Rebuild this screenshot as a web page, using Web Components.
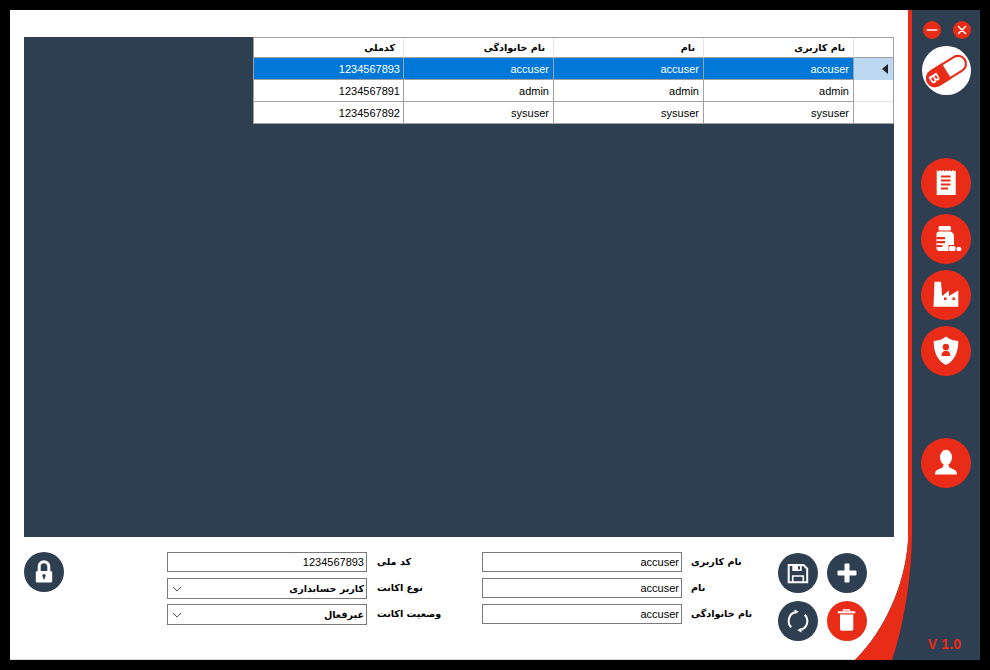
<!DOCTYPE html>
<html lang="fa">
<head>
<meta charset="utf-8">
<title>users</title>
<style>
    html, body { margin: 0; height: 100%; background: #000; }
    body { font: 11px "Liberation Sans", "DejaVu Sans", sans-serif; color: #000; }
</style>
</head>
<body>

<app-frame>
    <side-bar slot="side">
        <round-btn slot="controls" size="18" color="#e82c17">
            <svg viewBox="0 0 18 18"><path d="M4.500 9h9" stroke="#f6c9c2" stroke-width="2.200" stroke-linecap="round"/></svg>
        </round-btn>
        <round-btn slot="controls" size="18" color="#e82c17">
            <svg viewBox="0 0 18 18"><path d="M5.500 5.500l7 7M12.500 5.500l-7 7" stroke="#fff" stroke-width="1.500" stroke-linecap="round"/></svg>
        </round-btn>

        <round-btn slot="logo" size="49" color="#fff">
            <svg viewBox="0 0 49 49">
                <g transform="rotate(-32 24.500 25)">
                    <rect x="3" y="17" width="43" height="16" rx="8" fill="#fff" stroke="#e82c17" stroke-width="2.200"/>
                    <path d="M11 16h13.500v18H11a9 9 0 0 1 0-18z" fill="#e82c17"/>
                    <text transform="translate(10.500 25) rotate(90)" y="4.500" text-anchor="middle" fill="#fff" font-family="Liberation Sans" font-weight="700" font-size="13">B</text>
                </g>
            </svg>
        </round-btn>

        <round-btn slot="nav" size="50" color="#e82c17">
            <svg viewBox="0 0 50 50">
                <path d="M15.700 12l1.600 1.500L19 12l1.600 1.500L22.200 12l1.600 1.500L25.400 12l1.600 1.500L28.600 12l1.600 1.500L31.800 12l1.500 1.500 1.400-1.500V37H15.700z" fill="#fff"/>
                <path d="M20 18.500h9.500M20 22.500h9.500M20 26.500h9.500M20 30.500h7" stroke="#e82c17" stroke-width="1.800"/>
            </svg>
        </round-btn>
        <round-btn slot="nav" size="50" color="#e82c17">
            <svg viewBox="0 0 50 50">
                <rect x="17.500" y="12" width="12.500" height="4.500" rx="1.500" fill="#fff"/>
                <path d="M18 17.500h11.500c2 .8 3.500 2.500 3.500 5V31h-5.500v6H18.500a3 3 0 0 1-3-3V20c0-1.500 1-2.200 2.500-2.500z" fill="#fff"/>
                <path d="M15.500 23h8.500v2.200h-8.500zM15.500 27h8.500v2.200h-8.500zM15.500 31h6v2h-6z" fill="#e82c17"/>
                <rect x="28" y="32" width="6.500" height="5" rx="1.500" fill="#fff"/>
                <rect x="35.500" y="33" width="4.800" height="4" rx="1.500" fill="#fff"/>
            </svg>
        </round-btn>
        <round-btn slot="nav" size="50" color="#e82c17">
            <svg viewBox="0 0 50 50">
                <path d="M12.500 36.700L13.500 11.700h6.500l1.200 14.300 6.800-5.500v5.500l9.300-5.500v16.200z" fill="#fff"/>
                <path d="M23 27.500h2.600v2.600H23zM31.500 27.500h2.600v2.600h-2.600z" fill="#e82c17"/>
            </svg>
        </round-btn>
        <round-btn slot="nav" size="50" color="#e82c17">
            <svg viewBox="0 0 50 50">
                <path d="M25 10.500c3 2.700 7.500 4.300 12.300 4.500 0 11-3.500 19.500-12.300 24-8.800-4.500-12.300-13-12.300-24 4.800-.2 9.300-1.800 12.300-4.500z" fill="#fff"/>
                <circle cx="24.900" cy="21" r="3.200" fill="#e82c17"/>
                <path d="M20.500 30c0-3.800 1.800-5.200 4.400-5.200s4.400 1.400 4.400 5.200z" fill="#e82c17"/>
            </svg>
        </round-btn>

        <round-btn slot="profile" size="50" color="#e82c17">
            <svg viewBox="0 0 50 50">
                <ellipse cx="25" cy="19.500" rx="6" ry="7.800" fill="#fff"/>
                <path d="M14 36.500c0-4 2.700-5.200 6-6.300 1.600-.6 2.300-1.500 2.300-3.200h5.400c0 1.700.7 2.600 2.300 3.200 3.300 1.100 6 2.300 6 6.300z" fill="#fff"/>
            </svg>
        </round-btn>

        <span slot="version">V 1.0</span>
    </side-bar>

    <dark-panel>
        <data-grid></data-grid>
    </dark-panel>

    <form-bar slot="form">
        <round-btn slot="lock" size="40" color="#2e3f52">
            <svg viewBox="0 0 40 40">
                <path d="M15.200 20v-5.500a4.800 4.800 0 0 1 9.600 0V20" fill="none" stroke="#fff" stroke-width="3"/>
                <rect x="11.800" y="19" width="16.400" height="11.500" rx="1.500" fill="#fff"/>
                <circle cx="20" cy="23.800" r="1.700" fill="#2e3f52"/>
                <path d="M19.200 24h1.600v3.300h-1.600z" fill="#2e3f52"/>
            </svg>
        </round-btn>

        <form-field slot="left" label="کد ملی">1234567893</form-field>
        <form-field slot="left" label="نوع اکانت" select>کاربر حسابداری</form-field>
        <form-field slot="left" label="وضعیت اکانت" select>غیرفعال</form-field>

        <form-field slot="right" label="نام کاربری" gap="9">accuser</form-field>
        <form-field slot="right" label="نام" gap="9">accuser</form-field>
        <form-field slot="right" label="نام خانوادگی" gap="9">accuser</form-field>

        <round-btn slot="actions" size="40" color="#2e3f52">
            <svg viewBox="0 0 40 40">
                <path d="M10.700 12h14.800l3.700 3.700V29.300H10.700z" fill="none" stroke="#fff" stroke-width="2"/>
                <path d="M14.300 12h9.400v6h-9.400z" fill="#fff"/>
                <path d="M20 13.300h2v3.200h-2z" fill="#2e3f52"/>
                <path d="M14.700 29v-6h10.600v6" fill="none" stroke="#fff" stroke-width="1.600"/>
            </svg>
        </round-btn>
        <round-btn slot="actions" size="40" color="#2e3f52">
            <svg viewBox="0 0 40 40"><path d="M17.500 11.500a1 1 0 0 1 1-1h3a1 1 0 0 1 1 1v6h6a1 1 0 0 1 1 1v3a1 1 0 0 1-1 1h-6v6a1 1 0 0 1-1 1h-3a1 1 0 0 1-1-1v-6h-6a1 1 0 0 1-1-1v-3a1 1 0 0 1 1-1h6z" fill="#fff"/></svg>
        </round-btn>
        <round-btn slot="actions" size="40" color="#2e3f52">
            <svg viewBox="0 0 40 40">
                <path d="M13.200 26.300a9.300 9.300 0 0 1 3.300-15" fill="none" stroke="#fff" stroke-width="2"/>
                <path d="M26.800 13.700a9.300 9.300 0 0 1-3.300 15" fill="none" stroke="#fff" stroke-width="2"/>
                <path d="M16.500 8.400l4.200 2.400-4.200 2.400z" fill="#fff"/>
                <path d="M23.500 31.600l-4.200-2.400 4.200-2.400z" fill="#fff"/>
            </svg>
        </round-btn>
        <round-btn slot="actions" size="40" color="#e82c17">
            <svg viewBox="0 0 40 40">
                <path d="M10.700 11.300h17.600" stroke="#fff" stroke-width="2"/>
                <path d="M16.500 10.500V9h6v1.500" fill="none" stroke="#fff" stroke-width="1.300"/>
                <path d="M13 13.500h13.300v14.400a1.800 1.800 0 0 1-1.800 1.800h-9.700a1.800 1.800 0 0 1-1.800-1.800z" fill="#fff"/>
            </svg>
        </round-btn>
    </form-bar>
</app-frame>

<script>
class AppFrame extends HTMLElement {
    constructor() {
        super()
        this.attachShadow({ mode: "open" }).innerHTML = `
        <div class="main">
            <slot></slot>
            <slot name="form"></slot>
        </div>
        <slot name="side"></slot>
        <svg class="corner" viewBox="845 520 67 140">
            <path d="M908 520V541C905 585 885 630 855 660H912V520Z" fill="#2e3f52"/>
            <path d="M908 520V541C905 585 885 630 855 660H892C904 625 912 575 912 530V520Z" fill="#e82c17"/>
        </svg>
        <style>
            :host {
                display: flex;
                position: relative;
                box-sizing: border-box;
                width: 970px;
                height: 650px;
                margin: 10px;
                background: #fff;
                border-bottom: 1px solid #d8d8d8;
            }
            .main {
                box-sizing: border-box;
                width: 898px;
                padding: 27px 14px 0;
            }
            .corner {
                position: absolute;
                left: 835px;
                top: 510px;
                width: 67px;
                height: 140px;
            }
        </style>
        `
    }
}

class SideBar extends HTMLElement {
    constructor() {
        super()
        this.attachShadow({ mode: "open" }).innerHTML = `
        <div class="controls"><slot name="controls"></slot></div>
        <div class="logo"><slot name="logo"></slot></div>
        <div class="nav"><slot name="nav"></slot></div>
        <div class="profile"><slot name="profile"></slot></div>
        <div class="version"><slot name="version"></slot></div>
        <style>
            :host {
                display: flex;
                flex-direction: column;
                align-items: center;
                box-sizing: border-box;
                width: 72px;
                height: 650px;
                margin-bottom: -1px;
                padding-top: 11px;
                background: #2e3f52;
                border-left: 4px solid #e82c17;
            }
            .controls { display: flex; gap: 12px; margin-left: 1px; }
            .logo { margin-top: 7px; height: 49px; }
            .nav { display: flex; flex-direction: column; gap: 6px; margin-top: 63px; }
            .profile { margin-top: 62px; }
            .version {
                margin-top: auto;
                margin-bottom: 8px;
                margin-right: 3px;
                font: bold 14px "Liberation Sans", sans-serif;
                color: #e82c17;
                letter-spacing: .2px;
            }
        </style>
        `
    }
}

class RoundBtn extends HTMLElement {
    constructor() {
        super()
        let size = this.getAttribute("size") || 40
        let color = this.getAttribute("color") || "#2e3f52"
        this.attachShadow({ mode: "open" }).innerHTML = `
        <slot></slot>
        <style>
            :host {
                display: block;
                width: ${size}px;
                height: ${size}px;
                border-radius: 50%;
                background: ${color};
                position: relative;
                z-index: 1;
            }
            ::slotted(svg) { display: block; width: 100%; height: 100%; }
        </style>
        `
    }
}

class DarkPanel extends HTMLElement {
    constructor() {
        super()
        this.attachShadow({ mode: "open" }).innerHTML = `
        <slot></slot>
        <style>
            :host {
                display: flex;
                justify-content: flex-end;
                align-items: flex-start;
                height: 500px;
                background: #2e3f52;
            }
        </style>
        `
    }
}

const GRID_ROWS = [
    ["1234567893", "accuser", "accuser", "accuser"],
    ["1234567891", "admin", "admin", "admin"],
    ["1234567892", "sysuser", "sysuser", "sysuser"],
]

class DataGrid extends HTMLElement {
    constructor() {
        super()
        let head = ["کدملی", "نام خانوادگی", "نام", "نام کاربری"]
        let headHtml = head.map(t => `<div class="h"><span dir="rtl">${t}</span></div>`).join("")
        let rowsHtml = GRID_ROWS.map((row, i) => `
            <div class="row ${i === 0 ? "sel" : ""}">
                ${row.map(t => `<div class="c">${t}</div>`).join("")}
                <div class="rh">${i === 0 ? '<i></i>' : ""}</div>
            </div>
        `).join("")

        this.attachShadow({ mode: "open" }).innerHTML = `
        <div class="row head">${headHtml}<div class="rh"></div></div>
        ${rowsHtml}
        <style>
            :host {
                display: block;
                width: 641px;
                box-sizing: border-box;
                background: #fff;
                border: 1px solid #a0a0a0;
                border-bottom: 0;
            }
            .row {
                display: grid;
                grid-template-columns: 150px 150px 150px 150px 39px;
                height: 22px;
            }
            .head { height: 20px; }
            .h, .c {
                box-sizing: border-box;
                text-align: right;
                border-right: 1px solid #a0a0a0;
                border-bottom: 1px solid #a0a0a0;
            }
            .h {
                border-right-color: #e4e4e4;
                padding: 1px 8px 0 0;
                font: bold 9.600px/18px "DejaVu Sans", sans-serif;
            }
            .c { padding: 2px 4px 0 0; font: 11px/19px "Liberation Sans", sans-serif; }
            .c:first-child { padding-right: 3px; }
            .rh { position: relative; box-sizing: border-box; border-bottom: 1px solid #e4e4e4; }
            .head .rh { border-bottom-color: #a0a0a0; }
            .row:last-of-type .rh { border-bottom-color: #a0a0a0; }
            .sel .c { background: #0078d7; color: #fff; }
            .sel .rh { background: #bcd9f1; border-bottom-color: #bcd9f1; }
            .rh i {
                position: absolute;
                left: 28px;
                top: 6px;
                border: 5px solid transparent;
                border-left: 0;
                border-right: 6px solid #222;
            }
        </style>
        `
    }
}

class FormField extends HTMLElement {
    constructor() {
        super()
        let label = this.getAttribute("label")
        let isSelect = this.hasAttribute("select")
        let gap = this.getAttribute("gap") || 10
        this.attachShadow({ mode: "open" }).innerHTML = `
        <div class="box ${isSelect ? "select" : ""}" dir="${isSelect ? "rtl" : "ltr"}">
            <slot></slot>
            ${isSelect ? '<svg viewBox="0 0 10 6"><path d="M1 1l4 4 4-4" fill="none" stroke="#555" stroke-width="1"/></svg>' : ""}
        </div>
        <label dir="rtl">${label}</label>
        <style>
            :host { display: flex; align-items: center; gap: ${gap}px; height: 20px; white-space: nowrap; }
            .box {
                position: relative;
                flex: none;
                box-sizing: border-box;
                width: 200px;
                height: 20px;
                padding-right: 2px;
                border: 1px solid #7a7a7a;
                text-align: right;
                font: 11px/19px "Liberation Sans", sans-serif;
            }
            .select { height: 21px; text-align: right; font: bold 9.600px/20px "DejaVu Sans", sans-serif; }
            .box svg { position: absolute; left: 4px; top: 7px; width: 10px; height: 6px; }
            label { font: bold 9.600px/22px "DejaVu Sans", sans-serif; }
        </style>
        `
    }
}

class FormBar extends HTMLElement {
    constructor() {
        super()
        this.attachShadow({ mode: "open" }).innerHTML = `
        <div class="lock"><slot name="lock"></slot></div>
        <div class="group left"><slot name="left"></slot></div>
        <div class="group right"><slot name="right"></slot></div>
        <div class="actions"><slot name="actions"></slot></div>
        <style>
            :host { display: flex; align-items: flex-start; margin-top: 15px; }
            .lock { width: 40px; }
            .group { display: flex; flex-direction: column; gap: 6px; width: 271px; }
            .left { margin-left: 103px; }
            .right { margin-left: 44px; }
            .actions {
                display: grid;
                grid-template-columns: 40px 40px;
                gap: 8px 9px;
                margin: 1px 0 0 25px;
            }
        </style>
        `
    }
}

customElements.define("app-frame", AppFrame)
customElements.define("side-bar", SideBar)
customElements.define("round-btn", RoundBtn)
customElements.define("dark-panel", DarkPanel)
customElements.define("data-grid", DataGrid)
customElements.define("form-field", FormField)
customElements.define("form-bar", FormBar)
</script>
</body>
</html>
